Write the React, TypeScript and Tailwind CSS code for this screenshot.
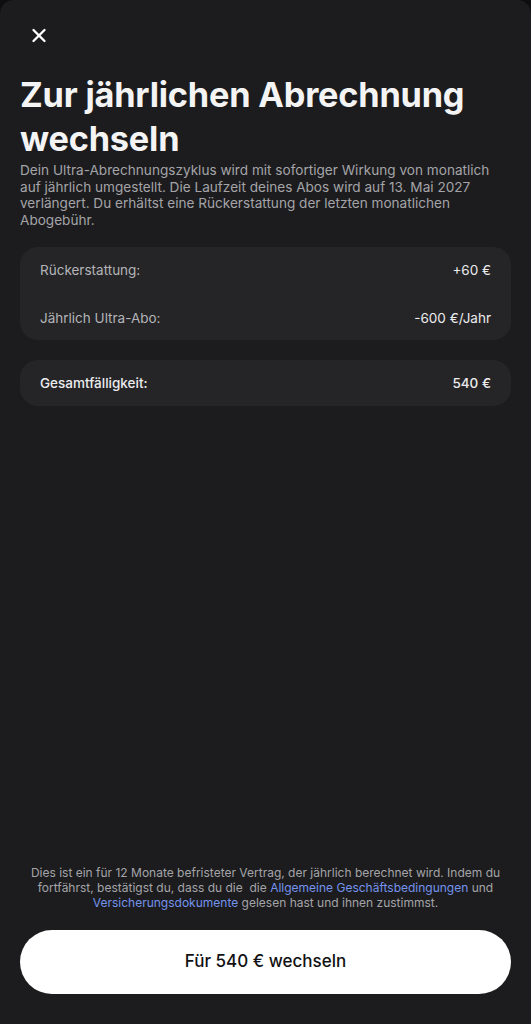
import { X } from "lucide-react";

const font = { fontFamily: "Inter, 'Noto Sans', sans-serif" };

function Row({ label, value, strong }: { label: string; value: string; strong?: boolean }) {
  return (
    <div className="flex items-center justify-between">
      <span className={strong ? "text-[#ececee]" : "text-[#b4b4b8]"}>{label}</span>
      <span className="text-[#ececee]">{value}</span>
    </div>
  );
}

export default function App() {
  return (
    <div className="bg-[#0e0e10]" style={font}>
      <div className="min-h-screen bg-[#1c1c1e] rounded-t-[14px] flex flex-col px-5 pb-[30px]">
        {/* Close */}
        <button className="mt-[24px] ml-[8px] w-[22px] h-[22px] flex items-center justify-center text-white">
          <X size={23} strokeWidth={2.6} />
        </button>

        {/* Heading */}
        <h1 className="mt-[27px] text-[34.3px] leading-[44px] font-bold text-[#f4f4f5] tracking-[-0.2px]">
          Zur jährlichen Abrechnung wechseln
        </h1>
        <p className="mt-[1px] pr-[12px] text-[13.6px] leading-[16.5px] text-[#a4a4a8]">
          Dein Ultra-Abrechnungszyklus wird mit sofortiger Wirkung von monatlich auf jährlich umgestellt. Die
          Laufzeit deines Abos wird auf 13. Mai 2027 verlängert. Du erhältst eine Rückerstattung der letzten
          monatlichen Abogebühr.
        </p>

        {/* Summary */}
        <div className="mt-[19px] rounded-[18px] bg-[#252527] px-5 pt-[15px] pb-[13px] flex flex-col gap-[31px] text-[13.5px] leading-[17px]">
          <Row label="Rückerstattung:" value="+60 €" />
          <Row label="Jährlich Ultra-Abo:" value="-600 €/Jahr" />
        </div>

        <div className="mt-[20px] rounded-[18px] bg-[#252527] px-5 h-[46px] flex flex-col justify-center text-[13.5px] leading-[17px] font-[450]">
          <Row label="Gesamtfälligkeit:" value="540 €" strong />
        </div>

        <div className="flex-1" />

        {/* Footer */}
        <p className="text-center text-[12px] leading-[15px] text-[#a4a4a8]">
          Dies ist ein für 12 Monate befristeter Vertrag, der jährlich berechnet wird. Indem du fortfährst,
          bestätigst du, dass du die&nbsp; die <span className="text-[#7593ec]">Allgemeine Geschäftsbedingungen</span> und{" "}
          <span className="text-[#7593ec]">Versicherungsdokumente</span> gelesen hast und ihnen zustimmst.
        </p>

        <button className="mt-[20px] h-[64px] w-full rounded-full bg-white text-[#111113] text-[17px] font-medium">
          Für 540 € wechseln
        </button>
      </div>
    </div>
  );
}
